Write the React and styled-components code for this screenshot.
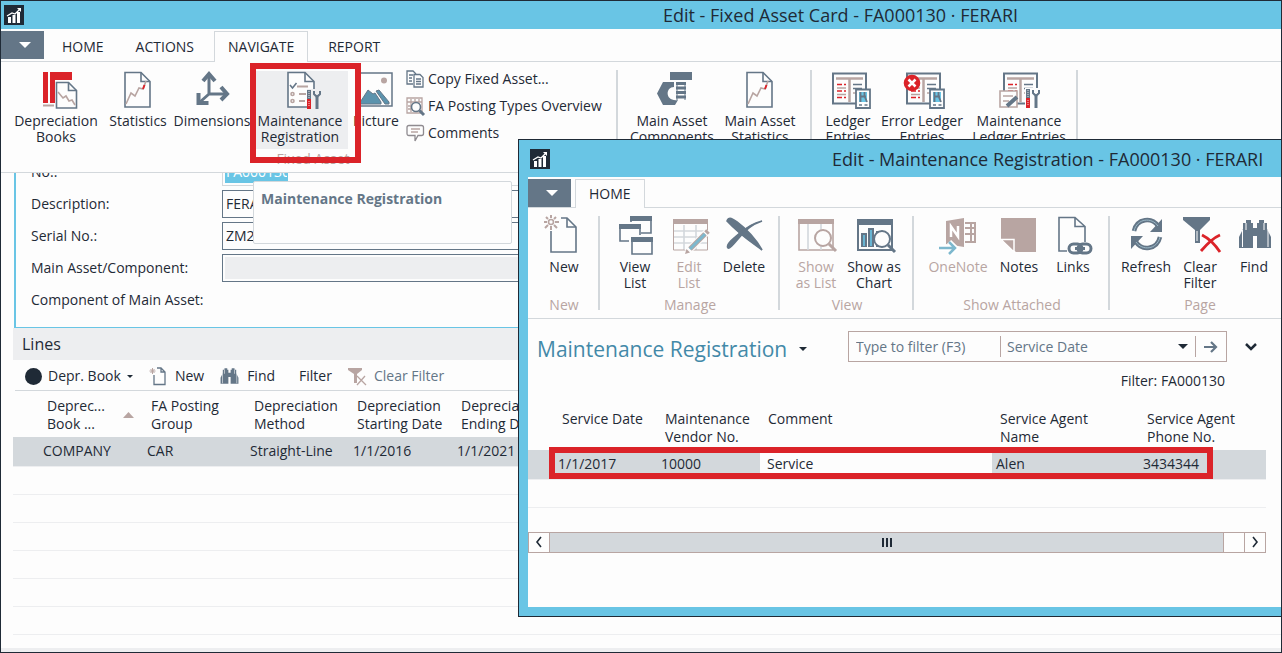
import React from "react";
import styled, { createGlobalStyle, css } from "styled-components";

const c = {
  blue: "#69c5e5",
  ink: "#1f2a36",
  slate: "#647687",
  rose: "#b8a5a2",
  red: "#db2329",
  line: "#d3d8dc",
  soft: "#edeef0",
  paper: "#fdfdfd",
};

const GlobalStyle = createGlobalStyle`
  * { box-sizing: border-box; }
  body {
    margin: 0;
    background: ${c.paper};
    color: ${c.ink};
    font: 14px/16px "Open Sans", "Noto Sans", sans-serif;
  }
  button, input, select { font: inherit; color: inherit; }
  svg { display: block; overflow: visible; flex: none; }
`;

/* ---------- window chrome ---------- */

const Desktop = styled.main`
  position: relative;
  display: flex;
  flex-direction: column;
  min-height: 100vh;
  overflow: hidden;
  border: 1px solid ${c.ink};
`;

const Dialog = styled.section`
  position: absolute;
  left: 517px;
  right: 0;
  top: 138px;
  display: flex;
  flex-direction: column;
  background: ${c.paper};
  border: 1px solid ${c.ink};
  border-right: 0;
`;

const DialogBody = styled.div`
  border: solid ${c.blue};
  border-width: 0 0 9px 9px;
  padding-bottom: 54px;
`;

const TitleBar = styled.header`
  display: flex;
  align-items: center;
  height: ${(p) => p.$height}px;
  padding: 0 ${(p) => p.$right}px 0 ${(p) => p.$left}px;
  background: ${c.blue};
`;

const Title = styled.h1`
  flex: 1;
  margin: 0;
  padding-left: ${(p) => p.$indent}px;
  font-size: 18px;
  line-height: 24px;
  font-weight: 400;
  text-align: center;
  white-space: nowrap;
`;

const TabBar = styled.nav`
  display: flex;
  align-items: stretch;
  gap: ${(p) => p.$gap}px;
  height: ${(p) => p.$height}px;
  padding-top: 2px;
  border-bottom: 1px solid ${c.line};
`;

const FileButton = styled.button`
  display: flex;
  align-items: center;
  justify-content: center;
  width: 43px;
  height: 28px;
  padding: 0 0 0 4px;
  border: 0;
  background: ${c.slate};
`;

const Tab = styled.button`
  margin: 0 0 -1px;
  padding: 0 13px;
  border: 1px solid transparent;
  border-bottom: 0;
  background: none;
  ${(p) => p.$active && css`
    margin-left: 2px;
    margin-right: 2px;
    border-color: ${c.line};
    background: ${c.paper};
  `}
`;

/* ---------- ribbon ---------- */

const Ribbon = styled.div`
  position: relative;
  display: flex;
  height: 111px;
  overflow: hidden;
  background: ${c.paper};
  border-bottom: 1px solid ${c.line};
  padding-left: ${(p) => p.$left || 0}px;
`;

const Group = styled.section`
  display: flex;
  flex: none;
  flex-direction: column;
  justify-content: space-between;
  position: relative;
  padding: 9px ${(p) => p.$pad || 0}px 5px;
  &::after {
    content: "";
    position: absolute;
    right: 0;
    top: 8px;
    bottom: 8px;
    width: ${(p) => (p.$last ? 0 : 2)}px;
    background: ${c.line};
  }
`;

const GroupItems = styled.div`
  display: flex;
`;

const GroupName = styled.div`
  color: ${c.rose};
  text-align: center;
`;

const RibbonButton = styled.button`
  display: flex;
  flex-direction: column;
  align-items: center;
  gap: 4px;
  width: ${(p) => p.$width}px;
  height: 78px;
  padding: 0;
  border: 0;
  background: ${(p) => (p.$hover ? c.soft : "none")};
  color: ${(p) => (p.disabled ? c.rose : c.ink)};
  white-space: pre;
  text-align: center;
`;

const SmallList = styled.div`
  display: flex;
  flex-direction: column;
  gap: 3px;
  width: 214px;
  padding: 0 0 0 2px;
  margin-top: -4px;
`;

const SmallButton = styled.button`
  display: flex;
  align-items: center;
  gap: 4px;
  height: 24px;
  padding: 0;
  border: 0;
  background: none;
  white-space: nowrap;
`;

const Highlight = styled.div`
  position: absolute;
  border: 6px solid ${c.red};
  pointer-events: none;
  ${(p) => p.$area === "ribbon"
    ? css`left: 249px; top: 62px; width: 111px; height: 100px;`
    : css`left: 21px; right: 53px; top: -3px; height: 32px;`}
`;

/* ---------- form ---------- */

const Form = styled.form`
  display: flex;
  flex-direction: column;
  gap: 4px;
  height: 155px;
  margin-left: 13px;
  padding-left: 15px;
  overflow: hidden;
  border-left: 2px solid ${c.blue};
  border-bottom: 1px solid ${c.blue};
`;

const Field = styled.div`
  display: flex;
  align-items: center;
  flex: none;
  height: 28px;
  &:first-child { margin-top: -15px; }
`;

const FieldLabel = styled.label`
  width: 191px;
`;

const FieldBox = styled.div`
  flex: 1;
  display: flex;
  height: 28px;
  padding: 2px;
  border: 1px solid ${(p) => (p.$faint ? c.line : c.slate)};
`;

const FieldInput = styled.input`
  width: ${(p) => (p.$selected ? "63px" : "100%")};
  padding: 0 1px;
  border: 0;
  outline: 0;
  background: ${(p) => (p.$selected ? c.blue : p.disabled ? c.soft : "transparent")};
  color: ${(p) => (p.$selected ? "#fff" : c.ink)};
`;

const Tooltip = styled.div`
  position: absolute;
  left: 252px;
  top: 180px;
  width: 259px;
  height: 63px;
  padding: 9px 7px;
  border: 1px solid ${c.line};
  border-radius: 2px;
  background: ${c.paper};
  color: ${c.slate};
  font-weight: 700;
`;

/* ---------- lines section ---------- */

const LinesHeader = styled.h2`
  margin: 0 0 0 12px;
  padding: 4px 9px;
  background: ${c.soft};
  font-size: 16px;
  line-height: 24px;
  font-weight: 400;
`;

const LinesTools = styled.div`
  display: flex;
  align-items: center;
  height: 31px;
  margin-left: 14px;
  padding: 2px 0 0 10px;
  gap: 16px;
  border-bottom: 1px solid ${c.line};
`;

const ToolButton = styled.button`
  display: flex;
  align-items: center;
  gap: ${(p) => (p.$menu ? 6 : 8)}px;
  padding: 0 0 0 ${(p) => (p.$plain ? 8 : 0)}px;
  border: 0;
  background: none;
  color: ${(p) => (p.disabled ? c.slate : c.ink)};
`;

const LinesArea = styled.div`
  flex: 1;
  padding-left: 12px;
`;

const Table = styled.table`
  width: 100%;
  border-collapse: collapse;
  table-layout: fixed;
  line-height: 18px;
`;

const HeadCell = styled.th`
  height: 46px;
  padding: 6px 0 4px ${(p) => p.$pad || 4}px;
  font-weight: 400;
  text-align: left;
  vertical-align: top;
  white-space: pre;
`;

const SortHead = styled.span`
  display: flex;
  align-items: center;
  gap: 18px;
`;

const Row = styled.tr`
  height: 28px;
  border-bottom: 1px solid ${c.soft};
  background: ${(p) => (p.$selected ? c.line : "none")};
`;

const Cell = styled.td`
  height: ${(p) => (p.$tall ? 29 : 28)}px;
  padding: 0;
  background: ${(p) => (p.$editing ? c.paper : "none")};
`;

const StatusStrip = styled.div`
  height: 4px;
  background: ${c.soft};
`;

/* ---------- list page ---------- */

const ListHeader = styled.div`
  display: flex;
  align-items: flex-start;
  justify-content: space-between;
  padding: 12px 24px 0 9px;
`;

const PageTitle = styled.h2`
  display: flex;
  align-items: center;
  gap: 12px;
  margin: 2px 0 0;
  color: #4389a8;
  font-size: 21px;
  line-height: 32px;
  font-weight: 400;
`;

const FilterRow = styled.div`
  display: flex;
  align-items: center;
  gap: 18px;
`;

const FilterBox = styled.div`
  display: flex;
  align-items: center;
  width: 379px;
  height: 31px;
  border: 1px solid ${c.rose};
  color: ${c.slate};
`;

const FilterInput = styled.input`
  width: 151px;
  padding: 0 7px;
  border: 0;
  outline: 0;
  background: none;
  &::placeholder { color: ${c.slate}; opacity: 1; }
`;

const SelectWrap = styled.div`
  position: relative;
  flex: 1;
  border: solid ${c.rose};
  border-width: 0 1px;
  svg { position: absolute; right: 7px; top: 8px; pointer-events: none; }
`;

const FilterSelect = styled.select`
  display: block;
  width: 100%;
  height: 21px;
  padding: 0 6px;
  border: 0;
  background: none;
  appearance: none;
`;

const IconButton = styled.button`
  display: flex;
  align-items: center;
  justify-content: center;
  padding: 0;
  border: 0;
  background: none;
  width: ${(p) => p.$width}px;
`;

const FilterNote = styled.div`
  padding: 7px 56px 0 0;
  text-align: right;
  line-height: 18px;
`;

const ListArea = styled.div`
  padding: 14px 15px 0 0;
`;

const ListTable = styled.div`
  position: relative;
`;

const RowFrame = styled.div`
  position: absolute;
  inset: 46px 0 auto 0;
`;

const ScrollBar = styled.div`
  display: flex;
  height: 21px;
  margin-top: 24px;
  border: 1px solid ${c.rose};
`;

const Thumb = styled.div`
  flex: 1;
  display: flex;
  align-items: center;
  justify-content: center;
  border: solid ${c.rose};
  border-width: 0 1px;
  background: ${c.line};
`;

const Track = styled.div`
  width: 21px;
  border-right: 1px solid ${c.rose};
`;

const CommentInput = styled.input`
  width: 100%;
  height: 18px;
  padding: 0 7px;
  border: 0;
  outline: 0;
  background: none;
`;

/* ---------- icons ---------- */

const Big = ({ children }) => (
  <svg width="40" height="38" viewBox="0 0 40 38" fill="none" stroke={c.slate} strokeWidth="1.6" aria-hidden="true">
    {children}
  </svg>
);

const Logo = () => (
  <svg width="20" height="20" viewBox="0 0 20 20" aria-hidden="true">
    <rect width="20" height="20" fill={c.ink} />
    <path d="M4 12h3v6H4zM8.500 10h3v8h-3zM13 7h3v11h-3z" fill="#fff" />
    <path d="M3 11l5-3 3 1 5-5" stroke="#fff" strokeWidth="1.300" fill="none" />
    <path d="M13 3h4v4z" fill="#fff" />
  </svg>
);

const Caret = ({ size = 8, color = c.ink }) => (
  <svg width={size} height={size / 2} viewBox="0 0 8 4" aria-hidden="true"><path d="M0 0h8L4 4z" fill={color} /></svg>
);

const Tools = ({ x, y }) => (
  <g transform={`translate(${x} ${y})`}>
    <path d="M0 0v9" stroke={c.slate} strokeWidth="4" />
    <path d="M0 9v10" stroke={c.red} strokeWidth="4" />
    <path d="M0 1v7M0 11v6" stroke="#fff" strokeWidth="0.800" strokeDasharray="1 1" />
    <path d="M8 7v12" stroke={c.slate} strokeWidth="3" />
    <path d="M5 1v3l3 3 3-3V1" stroke={c.slate} strokeWidth="2" />
  </g>
);

const ChartPage = () => (
  <>
    <path d="M7 1.500h16l9 9V36H7z" />
    <path d="M23 1.500v9h9" />
    <path d="M8 33l5-11 4 3 4-8 4 1 3-8" stroke={c.rose} />
    <path d="M25 18l1.500-4" stroke={c.red} strokeWidth="2" />
  </>
);

const Sheet = () => (
  <>
    <path d="M5 2.500h33v30H5z" fill={c.paper} strokeWidth="2" />
    <path d="M8 7.500h27M21.500 8v23" stroke={c.rose} strokeWidth="2.500" />
    <path d="M9 13.500h9M9 20h9M9 26.500h9" stroke={c.red} strokeDasharray="5 2" />
    <path d="M9 17h9M9 23.500h9M25 22h9" stroke={c.rose} />
    <path d="M25 13.500h9M25 17.500h9" stroke={c.slate} />
  </>
);

const Calc = () => (
  <>
    <path d="M28 18.500h14V37H28z" fill={c.paper} strokeWidth="1.800" />
    <path d="M31 21h8v10h-8z" fill={c.blue} stroke="none" />
    <path d="M32.500 21v10M36.500 21v4l2.500 6M32 25.500h6" strokeWidth="1.800" />
    <path d="M31 34h3M36.500 34h3" />
  </>
);

const Lens = ({ x, y, color = c.slate }) => (
  <>
    <circle cx={x} cy={y} r="8" fill={c.paper} stroke={color} strokeWidth="2" />
    <path d={`M${x + 6} ${y + 6}l7 7`} stroke={color} strokeWidth="3" />
  </>
);

const MiniWindow = ({ x, y }) => (
  <g transform={`translate(${x} ${y})`}>
    <path d="M1 1h20v16H1z" fill={c.paper} />
    <path d="M0 0h22v5H0z" fill={c.slate} stroke="none" />
  </g>
);

const Binoculars = () => (
  <>
    <path d="M9 6h3V3h5v3h2v5h4V6h2V3h5v3h3v6l4 8v11H23V19h-4v12H5V20l4-8z" fill={c.slate} stroke="none" />
    <path d="M8.500 13v17M12 6v7M30 6v7M34 13v17" stroke={c.paper} strokeWidth="1" />
  </>
);

const BookIcon = () => (
  <Big>
    <path d="M7 1h5v31H7zM14 1h22v8H19v23h-5z" fill={c.red} stroke="none" />
    <path d="M7 34.500h11" stroke={c.rose} strokeWidth="2" />
    <path d="M20.500 11.500h12l8 8V37H20.500z" fill={c.paper} />
    <path d="M32.500 11.500v8h8" />
    <path d="M22 21l5 6 3-2 3 5 3-1 3 5" stroke={c.rose} />
  </Big>
);

const StatsIcon = () => <Big><ChartPage /></Big>;

const DimensionsIcon = () => (
  <Big>
    <path d="M17 4v19h17M17 23L8 31" strokeWidth="3" />
    <path d="M11 10l6-7 6 7M29 16l6 7-6 6M6.500 22v10h10" strokeWidth="4" />
  </Big>
);

const RegistrationIcon = () => (
  <Big>
    <path d="M8 1.500h17l9 9V36H8z" fill={c.paper} />
    <path d="M25 1.500v9h9" />
    <path d="M17 15.500h11M19 23h7M19 30h6" stroke={c.rose} strokeWidth="2" />
    <path d="M10 14l2.500 3 4-5" />
    <circle cx="12.500" cy="23" r="1.500" stroke={c.rose} />
    <circle cx="12.500" cy="30" r="1.500" stroke={c.rose} />
    <path d="M27 18h13v20H27z" fill={c.soft} stroke="none" />
    <Tools x={29} y={19} />
  </Big>
);

const PictureIcon = () => (
  <Big>
    <path d="M2 2h34v33H2z" stroke={c.slate} strokeWidth="1.500" />
    <circle cx="28" cy="9.500" r="3" fill={c.rose} stroke="none" />
    <path d="M3 33l9-14 5 4 2-1 6 9v2zM20 20l3-1 10 12v2h-4z" fill="#5b93ad" stroke={c.slate} strokeWidth="1" />
  </Big>
);

const BoltIcon = () => (
  <Big>
    <path d="M18 1h22v8H18z" fill={c.slate} stroke="none" />
    <path d="M25 11v18M33 11v18" strokeWidth="1" />
    <path d="M24 12.500h10M24 17h10M24 21.500h10M24 26h10" strokeWidth="3" />
    <path d="M22 11H11L5 22.500 11 34h12l3-5c-13 2-13-13-4-13z" fill={c.slate} stroke="none" />
  </Big>
);

const LedgerIcon = () => <Big><Sheet /><Calc /></Big>;

const ErrorLedgerIcon = () => (
  <Big>
    <Sheet /><Calc />
    <circle cx="10" cy="12" r="7.500" fill={c.red} stroke={c.red} />
    <path d="M6.500 8.500l7 7M13.500 8.500l-7 7" stroke="#fff" strokeWidth="2.500" />
  </Big>
);

const MaintLedgerIcon = () => (
  <Big>
    <Sheet />
    <path d="M1 20h17v16H1z" fill={c.paper} stroke={c.rose} />
    <path d="M4 25h10M4 30h6" stroke={c.rose} />
    <path d="M8 35l10-9" strokeWidth="4" />
    <path d="M26 17h16v21H26z" fill={c.paper} stroke="none" />
    <Tools x={29} y={18} />
  </Big>
);

const NewIcon = () => (
  <Big>
    <path d="M7 14v21h25V10l-9-9h-6" />
    <path d="M23 1v9h9" />
    <circle cx="7" cy="5" r="2.500" stroke={c.rose} />
    <path d="M7-2v3M7 9v4M0 5h3M11 5h4M2 0l2 2M10 8l3 3M12 0l-2 2M4 8l-3 3" stroke={c.rose} strokeWidth="2" />
  </Big>
);

const ViewListIcon = () => (
  <Big>
    <MiniWindow x={15} y={-1} />
    <path d="M2 5h24v19H2z" fill={c.paper} stroke="none" />
    <MiniWindow x={4} y={7} />
    <path d="M14 18h23v18H14z" fill={c.paper} stroke="none" />
    <MiniWindow x={16} y={20} />
  </Big>
);

const EditListIcon = () => (
  <Big>
    <path d="M5 14h33M5 20h33M5 26h33M15 8v25M27 8v25" stroke={c.line} />
    <path d="M4 2h35v5H4z" fill={c.rose} stroke="none" />
    <path d="M4.500 4v29h34V4" stroke={c.rose} strokeWidth="1" />
    <path d="M18 35l21-21" stroke={c.paper} strokeWidth="7" />
    <path d="M21 32l15-15" stroke={c.rose} strokeWidth="5" />
    <path d="M21 32l15-15" stroke="#7db8ce" strokeWidth="3" />
    <path d="M37 16l2-2" stroke={c.rose} strokeWidth="5" />
    <path d="M16 37l1.500-5 3.500 3.500z" fill={c.rose} stroke="none" />
  </Big>
);

const DeleteIcon = () => (
  <Big>
    <path d="M3 4c2-5 6-2 10 1 8 6 17 14 25 28C27 25 15 17 3 4z" fill={c.slate} />
    <path d="M38 4c-9 3-18 10-24 18-5 6-9 10-10 9-2-2 2-7 7-11C20 12 28 6 38 4z" fill={c.slate} />
  </Big>
);

const ShowListIcon = () => (
  <Big>
    <path d="M3 3h34v30H3z" stroke={c.rose} />
    <path d="M12 7v26M25 7v26" stroke={c.line} />
    <path d="M2 2h36v5H2z" fill={c.rose} stroke="none" />
    <Lens x={27} y={21} color={c.rose} />
  </Big>
);

const ShowChartIcon = () => (
  <Big>
    <path d="M4 3h34v30H4z" strokeWidth="2" />
    <path d="M3 2h36v6H3z" fill={c.slate} stroke="none" />
    <path d="M7 16h6v14H7zM14 11h6v19h-6zM22 14h6v16h-6z" fill={c.slate} stroke="none" />
    <path d="M10 18v11M17 13v16" stroke={c.blue} />
    <Lens x={28} y={22} />
  </Big>
);

const OneNoteIcon = () => (
  <Big>
    <path d="M27 6h10v5H27M27 11h10v6H27M27 17h10v8H27M33 6v19" stroke={c.rose} strokeWidth="2" />
    <path d="M8 4l18-3v29L8 27z" fill={c.rose} stroke="none" />
    <path d="M13 20V9.500l7 10V9" stroke="#fff" strokeWidth="2.500" />
    <path d="M1 31h16M11 25l6 6-6 6" stroke="#fff" strokeWidth="6" />
    <path d="M1 31h16M11 25l6 6-6 6" stroke="#7db8ce" strokeWidth="2.500" />
  </Big>
);

const NotesIcon = () => (
  <Big>
    <path d="M2 1h35v34H17L2 23z" fill={c.rose} stroke="none" />
    <path d="M2 22.500h13V35z" fill={c.rose} stroke="#fff" strokeWidth="1.500" />
  </Big>
);

const LinksIcon = () => (
  <Big>
    <path d="M14 34H6V.5h16l10 9V25M22 .5v9h10" />
    <g strokeWidth="3">
      <rect x="16" y="27" width="13" height="9" rx="4.500" fill={c.paper} />
      <rect x="25" y="27" width="13" height="9" rx="4.500" />
      <path d="M22 31.500h10" />
    </g>
  </Big>
);

const RefreshIcon = () => (
  <Big>
    <path d="M8 14C11 1 26 0 32 9M34 20C31 33 16 34 10 25" strokeWidth="4.500" />
    <path d="M36 2v13H24zM5 32V19h12z" fill={c.slate} stroke="none" />
    <path d="M8 14C11 1 26 0 32 9M34 20C31 33 16 34 10 25" stroke="#9bb9c8" strokeWidth="1" />
  </Big>
);

const ClearFilterIcon = () => (
  <Big>
    <path d="M3 0h27v3L20 13v13h-5V13L3 3z" fill={c.slate} stroke="none" />
    <path d="M17 14v10" stroke={c.paper} strokeWidth="1" />
    <path d="M22 18c6 3 12 8 18 17M40 18c-7 3-13 9-19 16" stroke={c.red} strokeWidth="2.800" />
  </Big>
);

const FindIcon = () => <Big><Binoculars /></Big>;

const Small = ({ size = 18, children }) => (
  <svg width={size} height={size} viewBox="0 0 18 18" fill="none" stroke={c.slate} strokeWidth="1.300" aria-hidden="true">{children}</svg>
);

const CopyIcon = () => (
  <Small>
    <path d="M7 14H1V1h6l3 3M3 5h4M3 8h3M3 11h3" />
    <path d="M8 4.500h6l3 3V17H8zM10 9h5M10 11.500h5M10 14h5" />
  </Small>
);
const PostingIcon = () => (
  <Small>
    <path d="M1 1h15v15H1zM1 5h15M5 2v13M9 2v3M13 2v3M2 9h3M2 12h3" stroke={c.rose} />
    <circle cx="10" cy="10" r="4.500" fill={c.paper} strokeWidth="1.600" />
    <path d="M13.500 13.500l4.500 4.500" strokeWidth="3" />
  </Small>
);
const CommentIcon = () => (
  <Small>
    <path d="M3 1.500h12.500q2 0 2 2v6q0 2-2 2H12L9 17v-5.500H3q-2 0-2-2v-6q0-2 2-2z" stroke="#8f8b90" />
    <path d="M5 5h9M5 8h7" stroke={c.rose} />
  </Small>
);
const SmallNewIcon = () => (
  <Small>
    <path d="M5 8v9.500h11V5l-4-4H8M12 1v4h4" />
    <path d="M3.500 1v6M.5 4h6M1.500 2l4 4M5.500 2l-4 4" stroke={c.rose} strokeWidth="1" />
  </Small>
);
const SmallFindIcon = () => (
  <svg width="19" height="18" viewBox="4 2 34 30" fill="none" aria-hidden="true"><Binoculars /></svg>
);
const SmallClearIcon = () => (
  <Small>
    <path d="M0 1h14v2L9 7v9H6V7L0 3z" fill={c.rose} stroke="none" />
    <path d="M9 9l9 9M17 9l-8 9" stroke={c.rose} />
  </Small>
);
const DotIcon = () => <svg width="17" height="17" viewBox="0 0 17 17" aria-hidden="true"><circle cx="8.500" cy="8.500" r="8.500" fill={c.ink} /></svg>;
const ArrowIcon = () => (
  <svg width="14" height="12" viewBox="0 0 14 12" fill="none" stroke={c.slate} strokeWidth="2.200" aria-hidden="true"><path d="M0 6h12M7 1l5 5-5 5" /></svg>
);
const Chevron = ({ d, w = 12, h = 8, weight = 2.5 }) => (
  <svg width={w} height={h} viewBox={`0 0 ${w} ${h}`} fill="none" stroke={c.ink} strokeWidth={weight} aria-hidden="true"><path d={d} /></svg>
);

/* ---------- content ---------- */

const mainGroups = [
  {
    id: "fixed-asset",
    name: "Fixed Asset",
    items: [
      { label: "Depreciation\nBooks", width: 96, icon: BookIcon },
      { label: "Statistics", width: 68, icon: StatsIcon },
      { label: "Dimensions", width: 80, icon: DimensionsIcon },
      { label: "Maintenance\nRegistration", width: 96, icon: RegistrationIcon, hover: true },
      { label: "Picture", width: 56, icon: PictureIcon },
    ],
    small: [
      { label: "Copy Fixed Asset...", icon: CopyIcon },
      { label: "FA Posting Types Overview", icon: PostingIcon },
      { label: "Comments", icon: CommentIcon },
    ],
  },
  {
    id: "main-asset",
    pad: 9,
    items: [
      { label: "Main Asset\nComponents", width: 90, icon: BoltIcon },
      { label: "Main Asset\nStatistics", width: 86, icon: StatsIcon },
    ],
  },
  {
    id: "entries",
    pad: 5,
    items: [
      { label: "Ledger\nEntries", width: 62, icon: LedgerIcon },
      { label: "Error Ledger\nEntries", width: 86, icon: ErrorLedgerIcon },
      { label: "Maintenance\nLedger Entries", width: 108, icon: MaintLedgerIcon },
    ],
  },
];

const dialogGroups = [
  { id: "new", name: "New", pad: 9, items: [{ label: "New", width: 54, icon: NewIcon }] },
  {
    id: "manage",
    name: "Manage",
    pad: 8,
    items: [
      { label: "View\nList", width: 54, icon: ViewListIcon },
      { label: "Edit\nList", width: 54, icon: EditListIcon, disabled: true },
      { label: "Delete", width: 56, icon: DeleteIcon },
    ],
  },
  {
    id: "view",
    name: "View",
    pad: 9,
    items: [
      { label: "Show\nas List", width: 54, icon: ShowListIcon, disabled: true },
      { label: "Show as\nChart", width: 62, icon: ShowChartIcon },
    ],
  },
  {
    id: "attached",
    name: "Show Attached",
    pad: 10,
    items: [
      { label: "OneNote", width: 68, icon: OneNoteIcon, disabled: true },
      { label: "Notes", width: 54, icon: NotesIcon },
      { label: "Links", width: 54, icon: LinksIcon },
    ],
  },
  {
    id: "page",
    name: "Page",
    pad: 9,
    last: true,
    items: [
      { label: "Refresh", width: 54, icon: RefreshIcon },
      { label: "Clear\nFilter", width: 54, icon: ClearFilterIcon },
      { label: "Find", width: 54, icon: FindIcon },
    ],
  },
];

const RibbonGroups = ({ groups }) =>
  groups.map((g) => (
    <Group key={g.id} $pad={g.pad} $last={g.last}>
      <GroupItems>
        {g.items.map(({ label, width, icon: Icon, hover, disabled }) => (
          <RibbonButton key={label} type="button" $width={width} $hover={hover} disabled={disabled}>
            <Icon />
            <span>{label}</span>
          </RibbonButton>
        ))}
        {g.small && (
          <SmallList>
            {g.small.map(({ label, icon: Icon }) => (
              <SmallButton key={label} type="button"><Icon />{label}</SmallButton>
            ))}
          </SmallList>
        )}
      </GroupItems>
      {g.name && <GroupName>{g.name}</GroupName>}
    </Group>
  ));

const FileMenu = () => (
  <FileButton type="button" aria-label="File menu"><Caret size={12} color="#fff" /></FileButton>
);

const LinesTable = () => (
  <Table>
    <colgroup>
      <col style={{ width: 30 }} />
      <col style={{ width: 104 }} />
      <col style={{ width: 103 }} />
      <col style={{ width: 103 }} />
      <col style={{ width: 104 }} />
      <col />
    </colgroup>
    <thead>
      <tr>
        <HeadCell aria-label="Row" />
        <HeadCell><SortHead>{"Deprec...\nBook ..."}<svg width="11" height="6" viewBox="0 0 11 6" aria-hidden="true"><path d="M0 6l5.500-6L11 6z" fill={c.rose} /></svg></SortHead></HeadCell>
        <HeadCell>{"FA Posting\nGroup"}</HeadCell>
        <HeadCell>{"Depreciation\nMethod"}</HeadCell>
        <HeadCell>{"Depreciation\nStarting Date"}</HeadCell>
        <HeadCell>{"Depreciation\nEnding Date"}</HeadCell>
      </tr>
    </thead>
    <tbody>
      <Row $selected>
        <Cell $tall /><Cell>COMPANY</Cell><Cell>CAR</Cell><Cell>Straight-Line</Cell><Cell>1/1/2016</Cell><Cell>1/1/2021</Cell>
      </Row>
      {[1, 2, 3, 4, 5, 6].map((n) => <Row key={n}><Cell colSpan={6} /></Row>)}
    </tbody>
  </Table>
);

const ServiceTable = () => (
  <ListTable>
    <Table>
      <colgroup>
        <col style={{ width: 30 }} />
        <col style={{ width: 103 }} />
        <col style={{ width: 99 }} />
        <col />
        <col style={{ width: 4 }} />
        <col style={{ width: 147 }} />
        <col style={{ width: 123 }} />
      </colgroup>
      <thead>
        <tr>
          <HeadCell aria-label="Row" />
          <HeadCell>Service Date</HeadCell>
          <HeadCell>{"Maintenance\nVendor No."}</HeadCell>
          <HeadCell $pad={8}>Comment</HeadCell>
          <HeadCell aria-label="Divider" />
          <HeadCell>{"Service Agent\nName"}</HeadCell>
          <HeadCell>{"Service Agent\nPhone No."}</HeadCell>
        </tr>
      </thead>
      <tbody>
        <Row $selected>
          <Cell $tall /><Cell>1/1/2017</Cell><Cell>10000</Cell>
          <Cell $editing><CommentInput aria-label="Comment" defaultValue="Service" /></Cell>
          <Cell /><Cell>Alen</Cell><Cell>3434344</Cell>
        </Row>
        <Row><Cell colSpan={7} /></Row>
      </tbody>
    </Table>
    <RowFrame><Highlight $area="row" /></RowFrame>
  </ListTable>
);

const fields = [
  { id: "no", label: "No.:", value: "FA000130", selected: true },
  { id: "description", label: "Description:", value: "FERARI" },
  { id: "serial", label: "Serial No.:", value: "ZM2" },
  { id: "component", label: "Main Asset/Component:", value: "", disabled: true },
];

export default function App() {
  return (
    <>
      <GlobalStyle />
      <Desktop>
        <TitleBar $height={28} $left={3} $right={0}>
          <Logo />
          <Title $indent={376}>Edit - Fixed Asset Card - FA000130 · FERARI</Title>
        </TitleBar>
        <TabBar $height={33} $gap={4}>
          <FileMenu />
          <Tab type="button">HOME</Tab>
          <Tab type="button">ACTIONS</Tab>
          <Tab type="button" $active>NAVIGATE</Tab>
          <Tab type="button">REPORT</Tab>
        </TabBar>
        <Ribbon $left={7}><RibbonGroups groups={mainGroups} /></Ribbon>

        <Form>
          {fields.map((f) => (
            <Field key={f.id}>
              <FieldLabel htmlFor={f.id}>{f.label}</FieldLabel>
              <FieldBox $faint={f.selected}>
                <FieldInput id={f.id} defaultValue={f.value} $selected={f.selected} disabled={f.disabled} />
              </FieldBox>
            </Field>
          ))}
          <Field><span>Component of Main Asset:</span></Field>
        </Form>

        <LinesHeader>Lines</LinesHeader>
        <LinesTools>
          <ToolButton type="button" $menu><DotIcon />Depr. Book <Caret size={6} /></ToolButton>
          <ToolButton type="button"><SmallNewIcon />New</ToolButton>
          <ToolButton type="button"><SmallFindIcon />Find</ToolButton>
          <ToolButton type="button" $plain>Filter</ToolButton>
          <ToolButton type="button" disabled><SmallClearIcon />Clear Filter</ToolButton>
        </LinesTools>
        <LinesArea><LinesTable /></LinesArea>
        <StatusStrip />

        <Tooltip role="tooltip">Maintenance Registration</Tooltip>
        <Highlight $area="ribbon" />

        <Dialog>
          <TitleBar $height={37} $left={11} $right={28}>
            <Logo />
            <Title $indent={282}>Edit - Maintenance Registration - FA000130 · FERARI</Title>
          </TitleBar>
          <DialogBody>
            <TabBar $height={31} $gap={2}>
              <FileMenu />
              <Tab type="button" $active>HOME</Tab>
            </TabBar>
            <Ribbon><RibbonGroups groups={dialogGroups} /></Ribbon>
            <ListHeader>
              <PageTitle>Maintenance Registration <Caret size={8} /></PageTitle>
              <FilterRow>
                <FilterBox>
                  <FilterInput aria-label="Type to filter" placeholder="Type to filter (F3)" />
                  <SelectWrap>
                    <FilterSelect aria-label="Filter field"><option>Service Date</option></FilterSelect>
                    <Caret size={10} />
                  </SelectWrap>
                  <IconButton type="button" aria-label="Apply filter" $width={30}><ArrowIcon /></IconButton>
                </FilterBox>
                <IconButton type="button" aria-label="Expand" $width={12}><Chevron d="M1 1l5 5 5-5" /></IconButton>
              </FilterRow>
            </ListHeader>
            <FilterNote>Filter: FA000130</FilterNote>
            <ListArea>
              <ServiceTable />
              <ScrollBar>
                <IconButton type="button" aria-label="Scroll left" $width={20}><Chevron w={8} h={12} weight={1.6} d="M6 1L2 6l4 5" /></IconButton>
                <Thumb><Chevron w={10} h={9} weight={2} d="M1 0v9M5 0v9M9 0v9" /></Thumb>
                <Track />
                <IconButton type="button" aria-label="Scroll right" $width={20}><Chevron w={8} h={12} weight={1.6} d="M2 1l4 5-4 5" /></IconButton>
              </ScrollBar>
            </ListArea>
          </DialogBody>
        </Dialog>
      </Desktop>
    </>
  );
}
